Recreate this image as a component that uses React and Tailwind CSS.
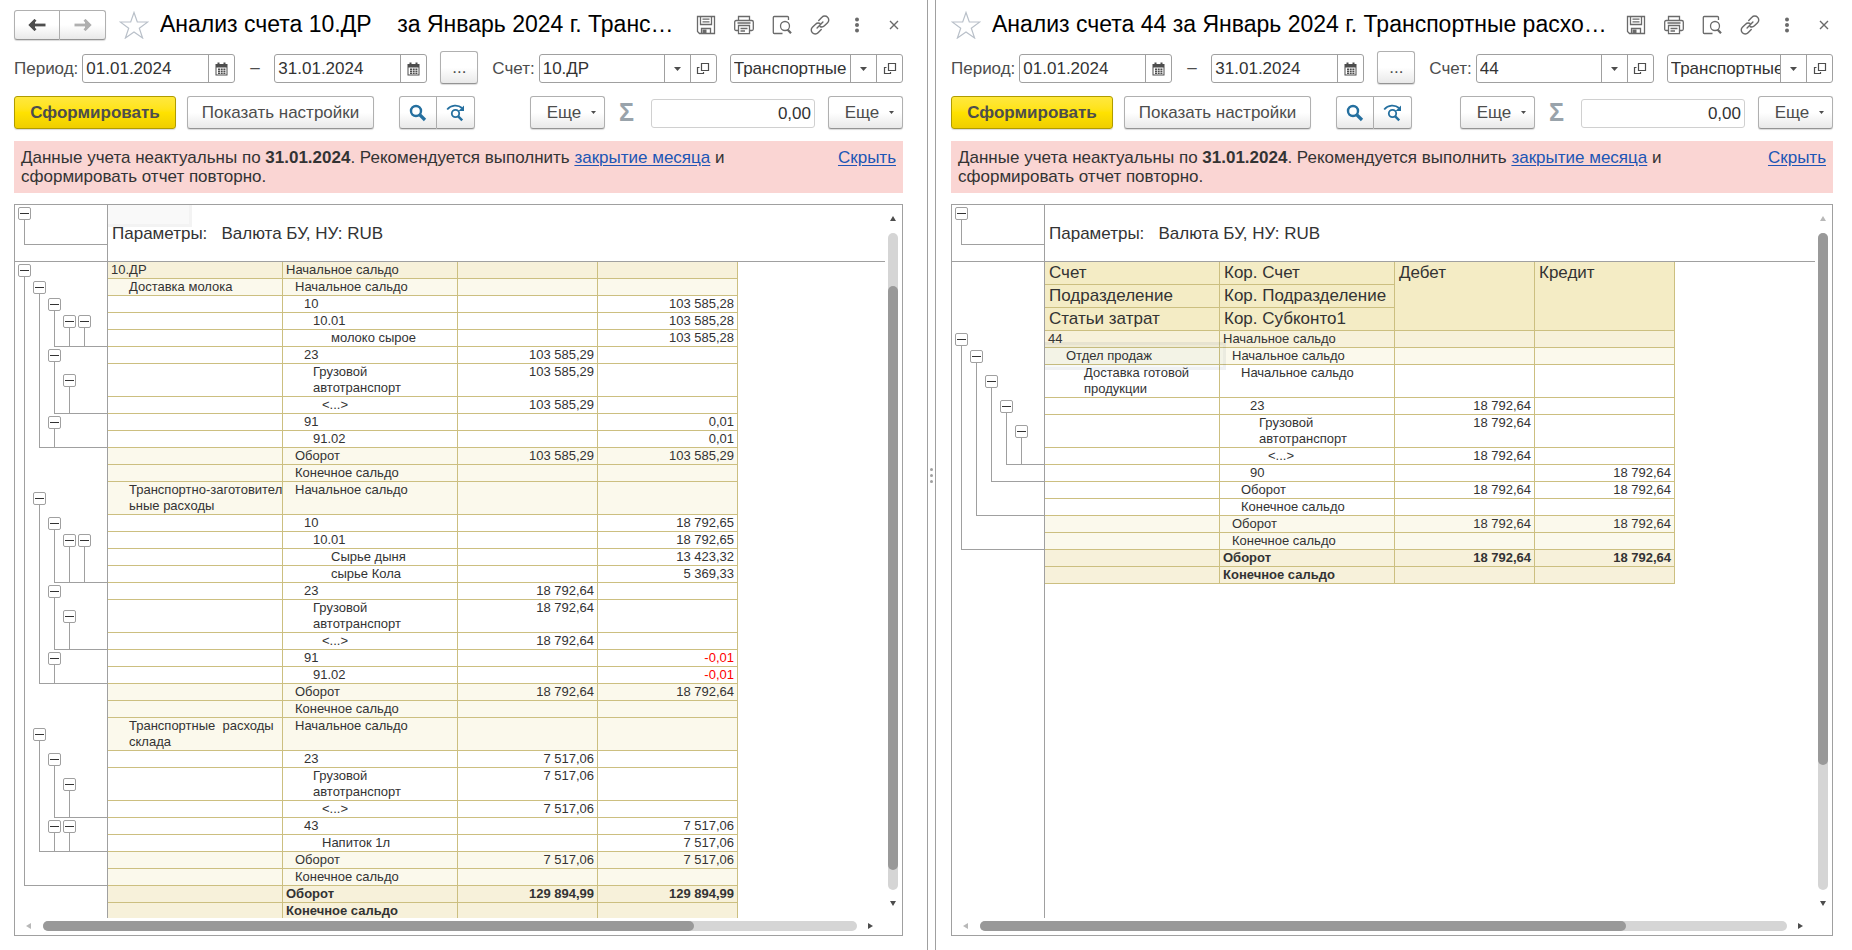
import { useId } from 'react'

const GRAY = 'border-[#a0a0a0]'
const BTN = 'flex items-center justify-center border border-[#b0b0b0] border-b-[#949494] bg-linear-to-b from-white from-50% to-[#e9e9e9] shadow-[0_1px_1px_#00000026] text-[#4d4d4d]'

const TONES = {
  head: 'bg-[#f4ecc5]',
  total: 'bg-[#f7f1da]',
  light: 'bg-[#fbf9ec]',
  plain: 'bg-white',
}

const INDENTS = ['pl-[3px]', 'pl-[12px]', 'pl-[21px]', 'pl-[30px]', 'pl-[39px]', 'pl-[48px]']

// a: account text, ai: its indent, b: corresponding account, bi: its indent, d / c: debit and credit
const leftRows = [
  { tone: 'total', a: '10.ДР', b: 'Начальное сальдо' },
  { tone: 'light', a: 'Доставка молока', ai: 2, b: 'Начальное сальдо', bi: 1 },
  { b: '10', bi: 2, c: '103 585,28' },
  { b: '10.01', bi: 3, c: '103 585,28' },
  { b: 'молоко сырое', bi: 5, c: '103 585,28' },
  { b: '23', bi: 2, d: '103 585,29' },
  { b: 'Грузовой\nавтотранспорт', bi: 3, d: '103 585,29' },
  { b: '<...>', bi: 4, d: '103 585,29' },
  { b: '91', bi: 2, c: '0,01' },
  { b: '91.02', bi: 3, c: '0,01' },
  { tone: 'light', b: 'Оборот', bi: 1, d: '103 585,29', c: '103 585,29' },
  { tone: 'light', b: 'Конечное сальдо', bi: 1 },
  { tone: 'light', a: 'Транспортно-заготовител\nьные расходы', ai: 2, b: 'Начальное сальдо', bi: 1 },
  { b: '10', bi: 2, c: '18 792,65' },
  { b: '10.01', bi: 3, c: '18 792,65' },
  { b: 'Сырье дыня', bi: 5, c: '13 423,32' },
  { b: 'сырье Кола', bi: 5, c: '5 369,33' },
  { b: '23', bi: 2, d: '18 792,64' },
  { b: 'Грузовой\nавтотранспорт', bi: 3, d: '18 792,64' },
  { b: '<...>', bi: 4, d: '18 792,64' },
  { b: '91', bi: 2, c: '-0,01' },
  { b: '91.02', bi: 3, c: '-0,01' },
  { tone: 'light', b: 'Оборот', bi: 1, d: '18 792,64', c: '18 792,64' },
  { tone: 'light', b: 'Конечное сальдо', bi: 1 },
  { tone: 'light', a: 'Транспортные  расходы\nсклада', ai: 2, b: 'Начальное сальдо', bi: 1 },
  { b: '23', bi: 2, d: '7 517,06' },
  { b: 'Грузовой\nавтотранспорт', bi: 3, d: '7 517,06' },
  { b: '<...>', bi: 4, d: '7 517,06' },
  { b: '43', bi: 2, c: '7 517,06' },
  { b: 'Напиток 1л', bi: 4, c: '7 517,06' },
  { tone: 'light', b: 'Оборот', bi: 1, d: '7 517,06', c: '7 517,06' },
  { tone: 'light', b: 'Конечное сальдо', bi: 1 },
  { tone: 'total', bold: true, b: 'Оборот', d: '129 894,99', c: '129 894,99' },
  { tone: 'total', bold: true, b: 'Конечное сальдо' },
]

// [level, first row, last row]
const leftGroups = [
  [0, 0, 31],
  [1, 1, 9], [2, 2, 4], [3, 3, 4], [4, 3, 4], [2, 5, 7], [3, 6, 7], [2, 8, 9],
  [1, 12, 21], [2, 13, 16], [3, 14, 16], [4, 14, 16], [2, 17, 19], [3, 18, 19], [2, 20, 21],
  [1, 24, 29], [2, 25, 27], [3, 26, 27], [2, 28, 29], [3, 28, 29],
]

const rightRows = [
  { tone: 'total', a: '44', b: 'Начальное сальдо' },
  { tone: 'light', a: 'Отдел продаж', ai: 2, b: 'Начальное сальдо', bi: 1 },
  { a: 'Доставка готовой\nпродукции', ai: 4, b: 'Начальное сальдо', bi: 2 },
  { b: '23', bi: 3, d: '18 792,64' },
  { b: 'Грузовой\nавтотранспорт', bi: 4, d: '18 792,64' },
  { b: '<...>', bi: 5, d: '18 792,64' },
  { b: '90', bi: 3, c: '18 792,64' },
  { b: 'Оборот', bi: 2, d: '18 792,64', c: '18 792,64' },
  { b: 'Конечное сальдо', bi: 2 },
  { tone: 'light', b: 'Оборот', bi: 1, d: '18 792,64', c: '18 792,64' },
  { tone: 'light', b: 'Конечное сальдо', bi: 1 },
  { tone: 'total', bold: true, b: 'Оборот', d: '18 792,64', c: '18 792,64' },
  { tone: 'total', bold: true, b: 'Конечное сальдо' },
]

const rightGroups = [[0, 0, 10], [1, 1, 8], [2, 2, 6], [3, 3, 5], [4, 4, 5]]

const isTall = (row) => Boolean(row.a?.includes('\n') || row.b?.includes('\n'))

function ArrowIcon({ className }) {
  return (
    <svg width="18" height="12" viewBox="0 0 18 12" fill="none" stroke="currentColor" strokeWidth="2.800" className={className}>
      <path d="M2.500 6h15" />
      <path d="M7.500.8 2.300 6l5.200 5.200" />
      <path d="M1 6 7 1v10z" fill="currentColor" stroke="none" />
    </svg>
  )
}

function StarIcon() {
  return (
    <svg width="30" height="28" viewBox="0 0 30 28" fill="none" stroke="#b9c0c9" strokeWidth="1.200">
      <path d="M15 1.500 18.300 11h10.500l-8.500 6.200 3.300 9.800-8.600-6-8.600 6 3.300-9.800L1.200 11h10.500z" />
    </svg>
  )
}

function SaveIcon() {
  return (
    <svg width="20" height="20" viewBox="0 0 20 20" fill="none" stroke="#6a6a6a" strokeWidth="1.300">
      <path d="M1.500 1.500h17v17h-15l-2-2z" />
      <path d="M4.500 1.500v8h11v-8M6.500 4.200h7M6.500 6.800h7" />
      <path d="M5.500 18.500v-5h9v5" />
      <path d="M6.500 14.500h4v4h-4z" fill="#6a6a6a" stroke="none" />
    </svg>
  )
}

function PrintIcon() {
  return (
    <svg width="20" height="20" viewBox="0 0 20 20" fill="none" stroke="#6a6a6a" strokeWidth="1.300">
      <path d="M4.500 5.500v-4h11v4" />
      <path d="M4.500 15.500H2.200q-1.500 0-1.500-1.500V7q0-1.500 1.500-1.500h15.600q1.500 0 1.500 1.500v7q0 1.500-1.500 1.500h-2.300" />
      <path d="M4.500 10.500h11v8.200h-11zM6.500 13.500h7M6.500 16h4.500M3.500 8h13" />
    </svg>
  )
}

function PreviewIcon() {
  return (
    <svg width="20" height="20" viewBox="0 0 20 20" fill="none" stroke="#6a6a6a" strokeWidth="1.300">
      <path d="M10.500 18.500H2.300q-1 0-1-1v-15q0-1 1-1h13.200q1 0 1 1V5" />
      <circle cx="13" cy="11" r="4.500" />
      <path d="m15.500 14.500 3.500 3.800" strokeWidth="2.200" />
    </svg>
  )
}

function LinkIcon() {
  return (
    <svg width="20" height="20" viewBox="0 0 24 24" fill="none" stroke="#6a6a6a" strokeWidth="1.700" strokeLinecap="round">
      <path d="M10.500 6.500 14.300 2.700a4.600 4.600 0 0 1 6.800 0 4.600 4.600 0 0 1 0 6.600L17.300 13a4.600 4.600 0 0 1-5.300.8" />
      <path d="M13.500 17.500 9.700 21.300a4.600 4.600 0 0 1-6.800 0 4.600 4.600 0 0 1 0-6.600L6.700 11a4.600 4.600 0 0 1 5.300-.8" />
      <path d="m8.500 15.500 7-7" />
    </svg>
  )
}

function DotsIcon() {
  return (
    <svg width="6" height="16" viewBox="0 0 6 16" fill="#6a6a6a">
      <circle cx="3" cy="2.500" r="2" />
      <circle cx="3" cy="8" r="2" />
      <circle cx="3" cy="13.500" r="2" />
    </svg>
  )
}

function CloseIcon() {
  return (
    <svg width="10" height="10" viewBox="0 0 10 10" stroke="#6a6a6a" strokeWidth="1.400">
      <path d="m1 1 8 8M9 1 1 9" />
    </svg>
  )
}

function CalendarIcon() {
  return (
    <svg width="13" height="14" viewBox="0 0 13 14" fill="#4d4d4d">
      <path fillRule="evenodd" d="M0.500 2h2V.5h2V2h4V.5h2V2h2V13.500h-12zM1.500 5.500v7h10v-7z" />
      <path d="M3 6.500h2V8H3zM5.700 6.500h2V8h-2zM8.400 6.500h2V8h-2zM3 8.500h2V10H3zM5.700 8.500h2V10h-2zM8.400 8.500h2V10h-2zM3 10.500h2V12H3zM5.700 10.500h2V12h-2zM8.400 10.500h2V12h-2z" />
    </svg>
  )
}

function OpenIcon() {
  return (
    <svg width="14" height="14" viewBox="0 0 14 14" fill="none" stroke="#4d4d4d" strokeWidth="1.200">
      <path d="M5.500 1.500h7v7h-7z" />
      <path d="M3.500 5.500h-2v6h6v-1.500" />
    </svg>
  )
}

function CaretIcon({ small }) {
  return (
    <svg width={small ? 5 : 7} height={small ? 3 : 4} viewBox="0 0 7 4" fill="#4d4d4d">
      <path d="M0 0h7L3.500 4z" />
    </svg>
  )
}

function SearchIcon() {
  return (
    <svg width="18" height="18" viewBox="0 0 18 18" fill="none" stroke="#246f9f">
      <circle cx="7" cy="7" r="5" strokeWidth="2.400" />
      <path d="m11 11 5 5" strokeWidth="3.200" />
    </svg>
  )
}

function SearchNextIcon() {
  return (
    <svg width="20" height="18" viewBox="0 0 20 18" fill="none" stroke="#246f9f">
      <path d="M1.200 5.500C5 .8 12 .3 16 4" strokeWidth="1.800" />
      <path d="M18 1.500v5.500h-5.500z" fill="#246f9f" stroke="none" />
      <circle cx="9.500" cy="9.500" r="3.700" strokeWidth="1.800" />
      <path d="m12.200 12.300 4 4" strokeWidth="2.400" />
    </svg>
  )
}

function Field({ label, hidden, value, className, buttons }) {
  const id = useId()
  return (
    <>
      {!hidden && <label htmlFor={id} className="mt-0.5 mr-1 shrink-0 text-[#4d4d4d]">{label}</label>}
      <div className={`mt-0.5 flex h-[29px] rounded-[3px] border ${GRAY} bg-white ${className}`}>
        <input id={id} aria-label={label} defaultValue={value} className="w-0 min-w-0 flex-1 pl-[3px] text-[#333] outline-none" />
        {buttons.map(([name, icon]) => (
          <button key={name} type="button" aria-label={name} className={`flex w-[26px] shrink-0 items-center justify-center border-l ${GRAY}`}>
            {icon}
          </button>
        ))}
      </div>
    </>
  )
}

const calendar = [['Выбрать дату', <CalendarIcon key="i" />]]
const refButtons = [['Выбрать', <CaretIcon key="i" />], ['Открыть', <OpenIcon key="i" />]]

function MoreButton() {
  return (
    <button type="button" className={`${BTN} h-[33px] w-[75px] shrink-0 gap-[10px] rounded-[3px] pl-2`}>
      Еще
      <CaretIcon small />
    </button>
  )
}

function TreeToggle({ className = '' }) {
  return (
    <button type="button" aria-label="Свернуть" className={`flex size-[13px] shrink-0 items-center justify-center rounded-[2px] border bg-white ${GRAY} ${className}`}>
      <span className="h-px w-[9px] bg-[#333]" />
    </button>
  )
}

function Tree({ rows, groups, header }) {
  return (
    <div
      className={`grid w-[93px] shrink-0 grid-cols-[repeat(5,15px)_1fr] content-start border-r pl-[3px] ${GRAY} ${header ? 'pt-[69px]' : ''}`}
      style={{ gridTemplateRows: rows.map((row) => (isTall(row) ? '33px' : '17px')).join(' ') }}
    >
      {groups.map(([level, from, to]) => (
        <div
          key={`${level}-${from}`}
          className="flex flex-col"
          style={{ gridColumn: `${level + 1} / 7`, gridRow: `${from + 1} / ${to + 2}` }}
        >
          <TreeToggle className={isTall(rows[from]) ? 'mt-[10px]' : 'mt-[2px]'} />
          <span className={`ml-[6px] flex-1 border-b border-l ${GRAY}`} />
        </div>
      ))}
    </div>
  )
}

function Report({ rows, header }) {
  const cell = 'border-r border-b border-[#ccbf80] align-top whitespace-pre p-0'
  return (
    <table className="w-[630px] shrink-0 table-fixed border-separate border-spacing-0 self-start text-[13px] leading-4 text-[#333]">
      <colgroup>
        <col className="w-[175px]" />
        <col className="w-[175px]" />
        <col className="w-[140px]" />
        <col className="w-[140px]" />
      </colgroup>
      {header && (
        <thead className="text-left text-[17px] leading-[22px]">
          {[['Счет', 'Кор. Счет'], ['Подразделение', 'Кор. Подразделение'], ['Статьи затрат', 'Кор. Субконто1']].map(([a, b], i) => (
            <tr key={a} className={TONES.head}>
              <th className={`${cell} pl-1 font-normal`}>{a}</th>
              <th className={`${cell} pl-1 font-normal`}>{b}</th>
              {i === 0 && <th rowSpan={3} className={`${cell} pl-1 font-normal`}>Дебет</th>}
              {i === 0 && <th rowSpan={3} className={`${cell} pl-1 font-normal`}>Кредит</th>}
            </tr>
          ))}
        </thead>
      )}
      <tbody>
        {rows.map((row, i) => (
          <tr key={i} className={`h-[17px] ${TONES[row.tone ?? 'plain']} ${row.bold ? 'font-bold' : ''}`}>
            <td className={`${cell} ${INDENTS[row.ai ?? 0]}`}>{row.a}</td>
            <td className={`${cell} ${INDENTS[row.bi ?? 0]}`}>{row.b}</td>
            <td className={`${cell} pr-[3px] text-right`}>{row.d}</td>
            <td className={`${cell} pr-[3px] text-right ${row.c?.startsWith('-') ? 'text-[#ff0000]' : ''}`}>{row.c}</td>
          </tr>
        ))}
      </tbody>
    </table>
  )
}

function ScrollArrow({ dir, off }) {
  const paths = { up: 'M3 0 6 5H0z', down: 'M0 0h6L3 5z', left: 'M5 0v6L0 3z', right: 'M0 0v6l5-3z' }
  return (
    <svg width="6" height="6" viewBox="0 0 6 6" className="shrink-0" fill={off ? '#b8b8b8' : '#4d4d4d'}>
      <path d={paths[dir]} />
    </svg>
  )
}

function Window({ title, nav, account, rows, groups, header, scroll, className, children }) {
  const sumId = useId()
  return (
    <section className={`flex min-h-0 min-w-0 flex-col pt-[10px] pb-[14px] ${className}`}>
      <header className="flex h-[31px] shrink-0 items-start">
        {nav && (
          <div className="mr-[13px] flex">
            <button type="button" aria-label="Назад" className={`${BTN} h-[30px] w-[46px] rounded-l-[3px]`}><ArrowIcon /></button>
            <button type="button" aria-label="Вперед" className={`${BTN} h-[30px] w-[46px] rounded-r-[3px] border-l-0`}>
              <ArrowIcon className="rotate-180 text-[#b0b0b0]" />
            </button>
          </div>
        )}
        <button type="button" aria-label="В избранное" className="pt-px"><StarIcon /></button>
        <h1 className="ml-[11px] min-w-0 flex-1 overflow-hidden text-[23px] leading-[29px] whitespace-pre text-black">{title}</h1>
        <div className="flex h-[29px] shrink-0 items-center gap-[18px] pr-1">
          <button type="button" aria-label="Сохранить"><SaveIcon /></button>
          <button type="button" aria-label="Печать"><PrintIcon /></button>
          <button type="button" aria-label="Просмотр"><PreviewIcon /></button>
          <button type="button" aria-label="Ссылка"><LinkIcon /></button>
          <button type="button" aria-label="Меню" className="px-[6px]"><DotsIcon /></button>
          <button type="button" aria-label="Закрыть" className="pl-[5px]"><CloseIcon /></button>
        </div>
      </header>

      <div className="mt-[10px] flex h-[33px] shrink-0 items-center">
        <Field label="Период:" value="01.01.2024" className="w-[153px] shrink-0" buttons={calendar} />
        <span className="w-[39px] shrink-0 text-center text-[#4d4d4d]">–</span>
        <Field label="Конец периода" hidden value="31.01.2024" className="w-[153px] shrink-0" buttons={calendar} />
        <button type="button" aria-label="Выбрать период" className={`${BTN} mr-[14px] ml-[13px] h-[33px] w-[38px] shrink-0 rounded-[3px]`}>...</button>
        <Field label="Счет:" value={account} className="mr-[13px] w-[178px] shrink-0" buttons={refButtons} />
        <Field label="Субконто" hidden value="Транспортные" className="min-w-0 flex-1" buttons={refButtons} />
      </div>

      <div className="mt-[12px] flex h-[33px] shrink-0 items-center">
        <button type="button" className="h-[33px] w-[162px] shrink-0 rounded-[3px] border border-[#b09c00] bg-linear-to-b from-[#ffe83c] via-[#ffe200] to-[#efce00] font-bold text-[#4d4d4d] shadow-[0_1px_1px_#00000026]">
          Сформировать
        </button>
        <button type="button" className={`${BTN} ml-[11px] h-[33px] w-[187px] shrink-0 rounded-[3px]`}>Показать настройки</button>
        <div className="ml-[25px] flex shrink-0">
          <button type="button" aria-label="Найти" className={`${BTN} h-[33px] w-[38px] rounded-l-[3px]`}><SearchIcon /></button>
          <button type="button" aria-label="Найти далее" className={`${BTN} h-[33px] w-[38px] rounded-r-[3px] border-l-0`}><SearchNextIcon /></button>
        </div>
        <div className="ml-auto flex items-center">
          <MoreButton />
          <label htmlFor={sumId} className="w-[46px] pr-[3px] text-center text-[25px] leading-[29px] font-bold text-[#99a3ab]">Σ</label>
          <input id={sumId} readOnly value="0,00" className="mt-0.5 mr-[13px] h-[29px] w-[164px] rounded-[3px] border border-[#d0d0d0] pr-[3px] text-right text-[#333] outline-none" />
          <MoreButton />
        </div>
      </div>

      <div className="mt-[12px] flex shrink-0 justify-between gap-6 bg-[#fad5d3] p-[7px] leading-[19px] text-[#333]">
        <p>
          Данные учета неактуальны по <b>31.01.2024</b>. Рекомендуется выполнить{' '}
          <a href="#close" className="text-[#2055b5] underline underline-offset-2">закрытие месяца</a> и сформировать отчет повторно.
        </p>
        <a href="#hide" className="text-[#2055b5] underline underline-offset-2">Скрыть</a>
      </div>

      <div className={`mt-[11px] flex min-h-0 flex-1 flex-col border ${GRAY}`}>
        <div className="flex min-h-0 flex-1">
          <div className="relative flex min-w-0 flex-1 flex-col overflow-hidden">
            {children}
            <div className={`flex h-[57px] shrink-0 border-b ${GRAY}`}>
              <div className={`flex w-[93px] flex-col border-r pt-[2px] pl-[3px] ${GRAY}`}>
                <TreeToggle />
                <span className={`ml-[6px] h-[25px] border-b border-l ${GRAY}`} />
              </div>
              <p className="relative pt-[18px] pl-[4px] leading-[22px] whitespace-pre text-[#333]">Параметры:   Валюта БУ, НУ: RUB</p>
            </div>
            <div className="flex min-h-0 flex-1 overflow-hidden">
              <Tree rows={rows} groups={groups} header={header} />
              <Report rows={rows} header={header} />
            </div>
          </div>
          <div className="flex w-[17px] shrink-0 flex-col items-center py-[11px] pr-px">
            <ScrollArrow dir="up" off={scroll.top === 0} />
            <div className="my-[11px] flex w-[10px] flex-1 flex-col rounded-full bg-[#d5d5d5]">
              <div style={{ height: `${scroll.top}%` }} />
              <div className="rounded-full bg-[#999]" style={{ height: `${scroll.height}%` }} />
            </div>
            <ScrollArrow dir="down" />
          </div>
        </div>
        <div className="flex h-[17px] shrink-0 items-center pr-[28px] pb-px pl-[11px]">
          <ScrollArrow dir="left" off />
          <div className="mx-[11px] h-[10px] flex-1 rounded-full bg-[#d5d5d5]">
            <div className="h-full rounded-full bg-[#999]" style={{ width: `${scroll.width}%` }} />
          </div>
          <ScrollArrow dir="right" />
        </div>
      </div>
    </section>
  )
}

export default function App() {
  return (
    <main className="grid h-screen grid-cols-[927fr_9px_916fr] grid-rows-[minmax(0,1fr)] overflow-hidden bg-white font-['Liberation_Sans',Arial,sans-serif] text-[17px]">
      <Window
        nav
        title="Анализ счета 10.ДР    за Январь 2024 г. Транс…"
        account="10.ДР"
        rows={leftRows}
        groups={leftGroups}
        scroll={{ top: 8, height: 89, width: 80 }}
        className="pr-[24px] pl-[14px]"
      >
        <div className="absolute top-0 left-[93px] h-[22px] w-[84px] border-r-3 border-b-3 border-[#f3f3f3] bg-[#f9f9f9]" />
      </Window>
      <div className="flex flex-col items-center justify-center gap-[3px] border-x border-[#a0a0a0]">
        <span className="size-[3px] rounded-full bg-[#a0a0a0]" />
        <span className="size-[3px] rounded-full bg-[#a0a0a0]" />
        <span className="size-[3px] rounded-full bg-[#a0a0a0]" />
      </div>
      <Window
        title="Анализ счета 44 за Январь 2024 г. Транспортные расхо…"
        account="44"
        header
        rows={rightRows}
        groups={rightGroups}
        scroll={{ top: 0, height: 81, width: 80 }}
        className="pr-[19px] pl-[15px]"
      >
        <div className="pointer-events-none absolute top-[137px] left-[93px] h-[28px] w-[181px] border-3 border-l-0 border-[#00004408] bg-[#00404408]" />
      </Window>
    </main>
  )
}
